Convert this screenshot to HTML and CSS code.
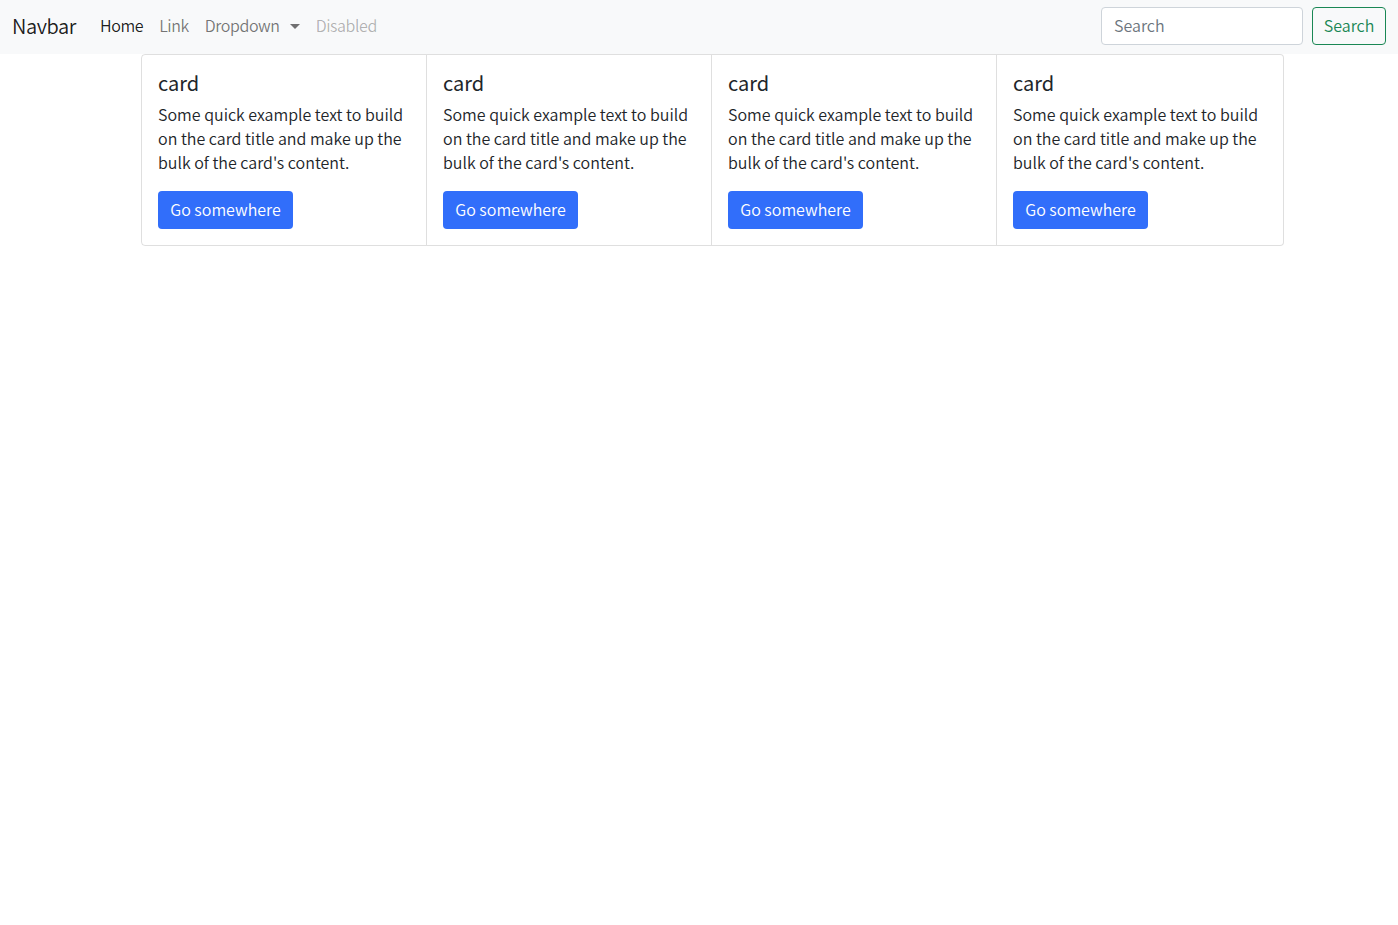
FILE: index.html
```html
<!DOCTYPE html>
<html>
<head>
<meta charset="utf-8">
<link rel="stylesheet" href="styles.css">
</head>
<body>
<nav class="navbar">
  <div class="nav-inner">
    <a class="brand" href="#">Navbar</a>
    <ul class="nav">
      <li><a class="nav-link active" href="#">Home</a></li>
      <li><a class="nav-link" href="#">Link</a></li>
      <li><a class="nav-link dropdown" href="#">Dropdown</a></li>
      <li><a class="nav-link disabled" href="#">Disabled</a></li>
    </ul>
    <form class="search">
      <input class="search-input" type="search" placeholder="Search">
      <button class="search-btn" type="button">Search</button>
    </form>
  </div>
</nav>
<div class="container">
  <div class="card-group">
    <div class="card">
      <h5 class="card-title">card</h5>
      <p class="card-text">Some quick example text to build on the card title and make up the bulk of the card's content.</p>
      <a href="#" class="btn">Go somewhere</a>
    </div>
    <div class="card">
      <h5 class="card-title">card</h5>
      <p class="card-text">Some quick example text to build on the card title and make up the bulk of the card's content.</p>
      <a href="#" class="btn">Go somewhere</a>
    </div>
    <div class="card">
      <h5 class="card-title">card</h5>
      <p class="card-text">Some quick example text to build on the card title and make up the bulk of the card's content.</p>
      <a href="#" class="btn">Go somewhere</a>
    </div>
    <div class="card">
      <h5 class="card-title">card</h5>
      <p class="card-text">Some quick example text to build on the card title and make up the bulk of the card's content.</p>
      <a href="#" class="btn">Go somewhere</a>
    </div>
  </div>
</div>
</body>
</html>
```
FILE: styles.css
```css
* { box-sizing: border-box; }
body {
  margin: 0;
  font-family: "Noto Sans CJK KR", "Noto Sans", sans-serif;
  font-weight: 350;
  font-size: 16px;
  line-height: 24px;
  color: #212529;
  background: #fff;
}
.navbar {
  background: #f8f9fa;
  padding: 7px 0 9px;
}
.nav-inner {
  display: flex;
  align-items: center;
  padding: 0 12px;
  height: 38px;
}
.brand {
  font-size: 20px;
  line-height: 30px;
  color: rgba(0,0,0,.9);
  text-decoration: none;
  margin-right: 16px;
  letter-spacing: -0.4px;
}
.nav {
  display: flex;
  list-style: none;
  margin: 0;
  padding: 0;
  flex: 1;
  letter-spacing: -0.4px;
}
.nav-link {
  display: block;
  padding: 7px 8px 9px;
  color: rgba(0,0,0,.55);
  text-decoration: none;
}
.nav-link.active { color: rgba(0,0,0,.9); }
.nav-link.disabled { color: rgba(0,0,0,.3); }
.dropdown::after {
  content: "";
  display: inline-block;
  margin-left: 10px;
  vertical-align: 3px;
  border-top: 5px solid;
  border-right: 5px solid transparent;
  border-left: 5px solid transparent;
}
.search {
  display: flex;
  margin: 0;
}
.search-input {
  width: 202px;
  height: 38px;
  padding: 5px 12px 7px;
  font: inherit;
  border: 1px solid #ced4da;
  border-radius: 4px;
  margin-right: 9px;
  background: #fff;
  color: #212529;
}
.search-input::placeholder { color: #6c757d; }
.search-btn {
  width: 74px;
  height: 38px;
  padding: 5px 0 7px;
  font: inherit;
  text-align: center;
  color: #198754;
  background: transparent;
  border: 1px solid #198754;
  border-radius: 4px;
}
.container {
  padding-left: 141px;
}
.card-group {
  display: flex;
}
.card {
  width: 285px;
  border: 1px solid rgba(0,0,0,.125);
  padding: 16px;
}
.card + .card { border-left: 0; }
.card:first-child { border-radius: 4px 0 0 4px; width: 286px; }
.card:last-child { border-radius: 0 4px 4px 0; width: 287px; }
.card-title {
  margin: 0 0 7px;
  font-size: 20px;
  line-height: 24px;
  font-weight: 400;
}
.card-text {
  margin: 0 0 17px;
}
.btn {
  display: inline-block;
  width: 135px;
  height: 38px;
  padding: 6px 0 8px;
  text-align: center;
  color: #fff;
  background: #316efa;
  border-radius: 4px;
  text-decoration: none;
}
```
